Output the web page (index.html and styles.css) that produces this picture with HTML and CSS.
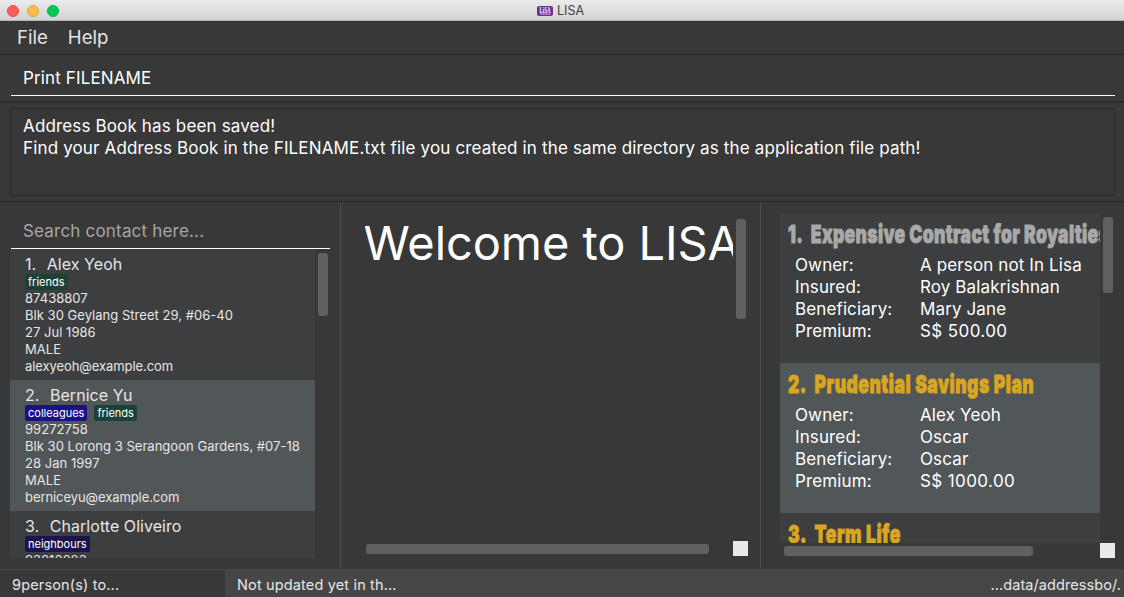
FILE: index.html
```html
<!DOCTYPE html>
<html lang="en">
<head>
<meta charset="utf-8">
<title>LISA</title>
<link rel="stylesheet" href="styles.css">
</head>
<body>
<div class="window">
  <header class="titlebar">
    <div class="lights"><i class="light close"></i><i class="light minimise"></i><i class="light expand"></i></div>
    <div class="caption">
      <svg class="logo" width="16" height="10" viewBox="0 0 16 10"><rect width="16" height="10" rx="2" fill="#6d2f9c"/><text x="2.5" y="7.2" font-family="Liberation Serif, serif" font-weight="bold" font-size="7.5" textLength="11" lengthAdjust="spacingAndGlyphs" fill="#fff">LiSA</text><rect x="3" y="7.6" width="10.5" height=".9" fill="#d9c2e8"/></svg>
      <span>LISA</span>
    </div>
  </header>
  <nav class="menubar"><span>File</span><span>Help</span></nav>
  <section class="command"><div class="field">Print FILENAME</div></section>
  <section class="result"><div class="result-box"><p>Address Book has been saved!</p><p>Find your Address Book in the FILENAME.txt file you created in the same directory as the application file path!</p></div></section>
  <main class="split">
    <section class="people">
      <div class="search">Search contact here...</div>
      <div class="people-body">
        <div class="people-list">
          <article class="person">
            <h2><span class="num">1.</span>Alex Yeoh</h2>
            <div class="tags"><span class="tag green">friends</span></div>
            <p>87438807</p><p>Blk 30 Geylang Street 29, #06-40</p><p>27 Jul 1986</p><p>MALE</p><p class="email">alexyeoh@example.com</p>
          </article>
          <article class="person alt">
            <h2><span class="num">2.</span>Bernice Yu</h2>
            <div class="tags"><span class="tag blue">colleagues</span><span class="tag green">friends</span></div>
            <p>99272758</p><p>Blk 30 Lorong 3 Serangoon Gardens, #07-18</p><p>28 Jan 1997</p><p>MALE</p><p class="email">berniceyu@example.com</p>
          </article>
          <article class="person">
            <h2><span class="num">3.</span>Charlotte Oliveiro</h2>
            <div class="tags"><span class="tag navy">neighbours</span></div>
            <p>93210283</p>
          </article>
        </div>
        <div class="thumb people-thumb"></div>
      </div>
    </section>
    <section class="welcome">
      <div class="welcome-view"><h1>Welcome to LISA</h1></div>
      <div class="thumb welcome-v"></div>
      <div class="thumb welcome-h"></div>
      <div class="corner"></div>
    </section>
    <section class="policies">
      <div class="policy-list">
        <article class="policy">
          <h2 class="grey"><span class="num">1.</span>Expensive Contract for Royalties</h2>
          <dl><dt>Owner:</dt><dd>A person not In Lisa</dd><dt>Insured:</dt><dd>Roy Balakrishnan</dd><dt>Beneficiary:</dt><dd>Mary Jane</dd><dt>Premium:</dt><dd class="amount">S$ 500.00</dd></dl>
        </article>
        <article class="policy alt">
          <h2><span class="num">2.</span>Prudential Savings Plan</h2>
          <dl><dt>Owner:</dt><dd>Alex Yeoh</dd><dt>Insured:</dt><dd>Oscar</dd><dt>Beneficiary:</dt><dd>Oscar</dd><dt>Premium:</dt><dd class="amount">S$ 1000.00</dd></dl>
        </article>
        <article class="policy">
          <h2><span class="num">3.</span>Term Life</h2>
        </article>
      </div>
      <div class="thumb policies-v"></div>
      <div class="thumb policies-h"></div>
      <div class="corner"></div>
    </section>
  </main>
  <footer class="status"><span class="total">9person(s) to...</span><span class="updated">Not updated yet in th...</span><span class="path">...data/addressbo/.</span></footer>
</div>
</body>
</html>
```
FILE: styles.css
```css
* { box-sizing: border-box; }
body { margin: 0; background: #383838; font-family: Inter, sans-serif; font-size: 17px; color: #fff; }
h1, h2, p, dl, dd { margin: 0; font-weight: 400; }
.window { width: 1124px; height: 597px; display: flex; flex-direction: column; overflow: hidden; white-space: nowrap; }

.titlebar { flex: none; height: 21px; background: linear-gradient(#ebebeb, #d3d3d3); border-bottom: 1px solid #b4b4b4; display: grid; grid-template-columns: 1fr auto 1fr; align-items: center; }
.lights { display: flex; gap: 8px; padding-left: 7px; }
.light { width: 12px; height: 12px; border-radius: 50%; border: 1px solid; }
.close { background: #fc5b57; border-color: #e2504b; }
.minimise { background: #fdbc4b; border-color: #e0a344; }
.expand { background: #06c955; border-color: #08b14c; }
.caption { display: flex; align-items: center; gap: 4px; font-size: 12.5px; color: #404040; padding-right: 3px; line-height: 21px; }
.logo { display: block; }

.menubar { flex: none; height: 34px; border-bottom: 1px solid #292929; display: flex; gap: 20px; padding-left: 17px; font-size: 18.6px; line-height: 33px; color: #e6e6e6; }
.command { flex: none; height: 48px; padding: 9px 9px 0 11px; border-bottom: 2px solid #2b2b2b; }
.field { height: 32px; border-bottom: 1px solid #fff; padding-left: 12px; line-height: 28px; letter-spacing: .13px; }
.result { flex: none; height: 99px; padding: 5px 9px 0 10px; border-bottom: 1px solid #292929; }
.result-box { height: 88px; border: 1px solid #292929; padding: 6px 12px; line-height: 22px; letter-spacing: .15px; }

.split { flex: none; height: 367px; display: flex; }
.thumb { background: #606060; border-radius: 3px; flex: none; }
.corner { width: 15px; height: 15px; background: #e9e9e9; }
.people { width: 340px; padding: 13px 10px 0; }
.search { margin-left: 1px; height: 34px; border-bottom: 1px solid #fff; padding-left: 12px; line-height: 32px; letter-spacing: .19px; color: #a6a6a6; }
.people-body { display: flex; gap: 3px; }
.people-list { width: 305px; height: 309px; overflow: hidden; }
.people-thumb { width: 10px; height: 63px; margin-top: 4px; }
.person { height: 131px; padding: 4px 15px 0; background: #3c3e3f; color: #e6e6e6; }
.alt { background: #515658; }
.person h2 { font-size: 16px; line-height: 22px; height: 21px; letter-spacing: .05px; }
.person .num { margin-right: 10.5px; }
.person p { font-size: 13px; line-height: 17px; letter-spacing: .03px; }
.person .email { letter-spacing: -.08px; }
.tags { display: flex; gap: 7px; height: 16px; }
.tag { height: 16px; padding: 0 3px; border-radius: 2px; font-size: 11px; line-height: 16px; color: #fff; }
.green { background: #1c4137; }
.blue { background: #1b1087; }
.navy { background: #1c124d; }

.welcome { width: 421px; border: solid #4d4d4d; border-width: 0 1px; margin: 1px 0; padding: 11px 12px 0 24px; display: grid; grid-template: 327px 15px / 368px 15px; align-items: start; }
.welcome-view { overflow: hidden; height: 327px; }
.welcome h1 { font-size: 47px; line-height: 57px; margin-left: -1.5px; letter-spacing: -.08px; }
.welcome-v { width: 10px; height: 100px; margin: 5px 0 0 3px; }
.welcome-h { width: 343px; height: 10px; margin: 3px 0 0 1px; }

.policies { padding: 11px 9px 0 19px; display: grid; grid-template: 330px 15px / 320px 15px; align-items: start; }
.policy-list { width: 320px; height: 330px; overflow: hidden; }
.policy { height: 150px; background: #3c3e3f; padding: 6px 15px 0; }
.policy.alt { background: #515658; }
.policy h2 { height: 35px; margin-left: -7px; font-weight: 900; font-size: 25px; line-height: 31px; letter-spacing: .73px; -webkit-text-stroke: .9px; color: #daa520; transform: scaleX(.7); transform-origin: left; }
.policy h2.grey { color: #a9a9a9; letter-spacing: .5px; }
.policy .num { margin-right: 11px; }
dl { display: grid; grid-template-columns: 125px auto; line-height: 22px; letter-spacing: .12px; }
.amount { letter-spacing: .4px; }
.policies-v { width: 10px; height: 76px; margin: 4px 0 0 3px; }
.policies-h { width: 249px; height: 10px; margin: 3px 0 0 4px; }

.status { flex: none; height: 28px; display: flex; background: #464646; font-size: 14.5px; line-height: 31px; letter-spacing: .15px; color: #e6e6e6; }
.total { width: 225px; padding-left: 12px; background: #383838; border-top: 1px solid #464646; line-height: 30px; }
.updated { flex: 1; padding-left: 12px; }
.path { padding-right: 3px; letter-spacing: .08px; }
```
